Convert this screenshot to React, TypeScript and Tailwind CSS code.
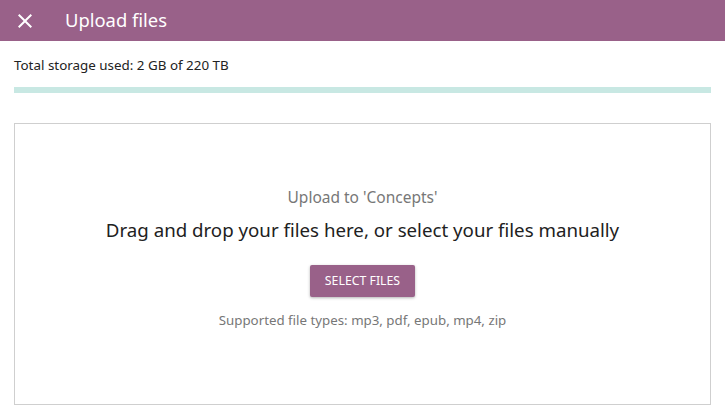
import React from 'react'

const App = () => {
  return (
    <div className="w-[725px] h-[418px] bg-white font-['Noto_Sans',sans-serif] overflow-hidden">
      {/* header */}
      <div className="h-[41px] bg-[#996189] flex items-center text-white">
        <button className="ml-[13px] w-[24px] h-[24px] flex items-center justify-center">
          <svg width="24" height="24" viewBox="0 0 24 24" fill="white">
            <path d="M19 6.41L17.59 5 12 10.59 6.41 5 5 6.41 10.59 12 5 17.59 6.41 19 12 13.41 17.59 19 19 17.59 13.41 12z" />
          </svg>
        </button>
        <h1 className="ml-[28px] text-[18.4px] leading-none">Upload files</h1>
      </div>

      <div className="px-[14px]">
        {/* storage */}
        <p className="mt-[15px] text-[13.4px] leading-[18px] text-[#222]">Total storage used: 2 GB of 220 TB</p>
        <div className="mt-[13px] h-[6px] w-full bg-[#c8e8e3]" />

        {/* drop zone */}
        <div className="mt-[30px] h-[282px] border border-[#cfcfcf] flex flex-col items-center pt-[63px]">
          <p className="text-[15.5px] leading-[20px] text-[#777]">Upload to 'Concepts'</p>
          <p className="mt-[11px] text-[18.7px] leading-[24px] text-[#212121]">
            Drag and drop your files here, or select your files manually
          </p>
          <button className="mt-[23px] h-[32px] px-[15px] rounded-[2px] bg-[#996189] text-white text-[12.3px] uppercase shadow-[0_1px_3px_rgba(0,0,0,0.3)]">
            Select files
          </button>
          <p className="mt-[15px] text-[13.3px] leading-[16px] text-[#777]">Supported file types: mp3, pdf, epub, mp4, zip</p>
        </div>
      </div>
    </div>
  )
}

export default App
